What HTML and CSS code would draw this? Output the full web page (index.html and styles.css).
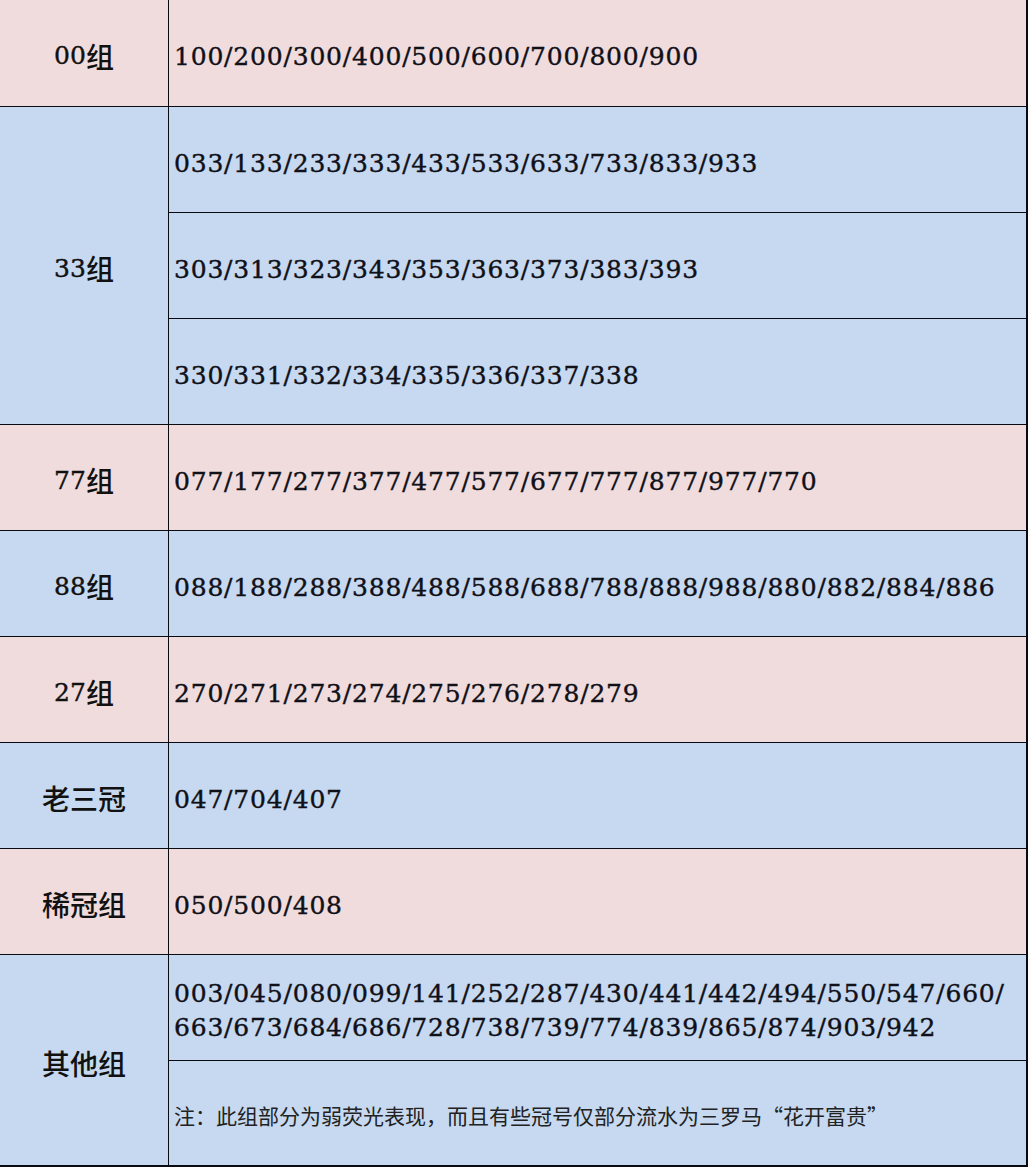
FILE: index.html
```html
<!DOCTYPE html>
<html lang="zh-CN">
<head>
<meta charset="utf-8">
<title>冠号分组</title>
<link rel="stylesheet" href="styles.css">
</head>
<body>
<div class="sheet">
  <div class="label pink r1"><span class="n">00</span>组</div>
  <div class="nums pink r1">100/200/300/400/500/600/700/800/900</div>

  <div class="label blue r2-4"><span class="n">33</span>组</div>
  <div class="nums blue">033/133/233/333/433/533/633/733/833/933</div>
  <div class="nums blue">303/313/323/343/353/363/373/383/393</div>
  <div class="nums blue">330/331/332/334/335/336/337/338</div>

  <div class="label pink"><span class="n">77</span>组</div>
  <div class="nums pink">077/177/277/377/477/577/677/777/877/977/770</div>

  <div class="label blue"><span class="n">88</span>组</div>
  <div class="nums blue">088/188/288/388/488/588/688/788/888/988/880/882/884/886</div>

  <div class="label pink"><span class="n">27</span>组</div>
  <div class="nums pink">270/271/273/274/275/276/278/279</div>

  <div class="label blue">老三冠</div>
  <div class="nums blue">047/704/407</div>

  <div class="label pink">稀冠组</div>
  <div class="nums pink">050/500/408</div>

  <div class="label blue r10-11">其他组</div>
  <div class="nums blue multi">003/045/080/099/141/252/287/430/441/442/494/550/547/660/<br>663/673/684/686/728/738/739/774/839/865/874/903/942</div>
  <div class="note blue">注：此组部分为弱荧光表现，而且有些冠号仅部分流水为三罗马“花开富贵”</div>
</div>
</body>
</html>
```

FILE: styles.css
```css
html, body {
  margin: 0;
  padding: 0;
  background: #000;
}

.sheet {
  width: 1028px;
  height: 1167px;
  box-sizing: border-box;
  padding: 0 2px 2px 0;
  display: grid;
  grid-template-columns: 168px 1fr;
  grid-template-rows: 106px repeat(9, 105px) 1fr;
  gap: 1px;
  background: #0a0a12;
}

.pink { background: #f0dcdd; }
.blue { background: #c6d9f0; }

.label {
  grid-column: 1;
  display: flex;
  align-items: center;
  justify-content: center;
  padding-top: 5px;
  font-family: "Noto Sans CJK SC", sans-serif;
  font-size: 28px;
  font-weight: 500;
  color: #111;
}

.label .n {
  font-family: "DejaVu Serif", serif;
  font-size: 25px;
  font-weight: 400;
  -webkit-text-stroke: 0.4px #111;
}

.r2-4 { grid-row: 2 / span 3; }
.r10-11 { grid-row: 10 / span 2; }

.nums {
  grid-column: 2;
  display: flex;
  align-items: center;
  padding: 7px 0 0 5px;
  font-family: "DejaVu Serif", serif;
  font-size: 25px;
  letter-spacing: 0.8px;
  color: #101018;
  -webkit-text-stroke: 0.4px #101018;
  white-space: nowrap;
}

.nums.multi {
  display: block;
  padding-top: 22px;
  line-height: 34px;
}

.note {
  grid-column: 2;
  display: flex;
  align-items: center;
  padding: 4px 0 0 5px;
  font-family: "Noto Sans CJK SC", sans-serif;
  font-size: 21px;
  color: #222;
}
```
